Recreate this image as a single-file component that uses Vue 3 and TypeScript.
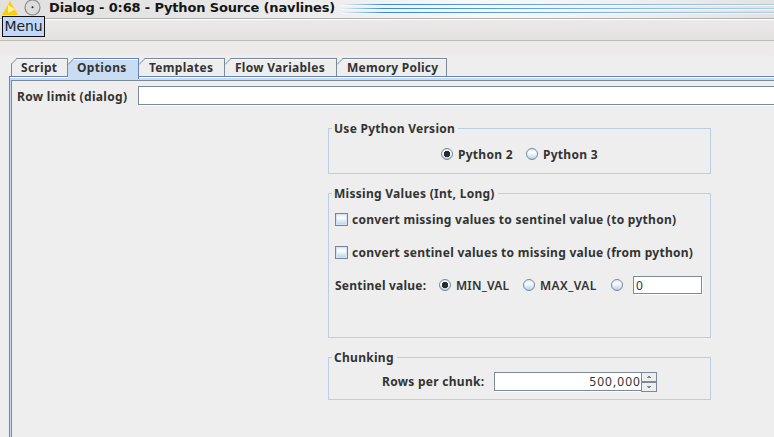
<script setup lang="ts">
import { ref } from 'vue'

const tabs = [
  { name: 'Script', cls: 't-script' },
  { name: 'Options', cls: 't-options' },
  { name: 'Templates', cls: 't-templates' },
  { name: 'Flow Variables', cls: 't-flow' },
  { name: 'Memory Policy', cls: 't-memory' },
]
const activeTab = ref('Options')
const pythonVersion = ref(2)
const sentinel = ref('min')
const toPython = ref(false)
const fromPython = ref(false)
const rowLimit = ref('')
const customValue = ref('0')
const rowsPerChunk = ref('500,000')
</script>

<template>
  <div class="dialog">
    <header class="titlebar">
      <svg class="logo" width="16" height="16" viewBox="0 0 16 16">
        <path d="M8 1L16 15H0Z" fill="#fdcf08" />
        <path d="M6 5L13 9.5L6 13Z" fill="#fff0a8" />
      </svg>
      <svg class="orb" width="17" height="17" viewBox="0 0 17 17">
        <circle cx="8.5" cy="8.5" r="7.5" fill="#dcdcdc" stroke="#8a8a8a" stroke-width="1.2" />
        <circle cx="8.5" cy="8.3" r="1" fill="#222" />
      </svg>
      <span class="title">Dialog - 0:68 - Python Source (navlines)</span>
      <div class="stripes"><i></i><i></i><i></i></div>
    </header>
    <div class="toolbar"><button class="menu">Menu</button></div>

    <nav class="tabs">
      <button
        v-for="tab in tabs"
        :key="tab.name"
        class="tab"
        :class="[tab.cls, { active: activeTab === tab.name }]"
        @click="activeTab = tab.name"
      >
        <svg class="corner" width="7" height="7" viewBox="0 0 7 7">
          <path class="cut" d="M0 0H6L0 6Z" />
          <path class="edge" d="M0 6.5L6.5 0" />
        </svg>
        <span>{{ tab.name }}</span>
      </button>
    </nav>

    <main class="pane">
      <div class="limit-row">
        <label class="limit-label" for="limit">Row limit (dialog)</label>
        <input id="limit" v-model="rowLimit" class="field limit" />
      </div>

      <div class="groups">
        <section class="group version">
          <h2 class="legend">Use Python Version</h2>
          <div class="version-row">
            <label class="radio" @click="pythonVersion = 2">
              <span class="dot" :class="{ on: pythonVersion === 2 }"></span>
              <span class="text">Python 2</span>
            </label>
            <label class="radio" @click="pythonVersion = 3">
              <span class="dot" :class="{ on: pythonVersion === 3 }"></span>
              <span class="text">Python 3</span>
            </label>
          </div>
        </section>

        <section class="group missing">
          <h2 class="legend">Missing Values (Int, Long)</h2>
          <label class="check" @click="toPython = !toPython">
            <span class="box"></span>
            <span class="text">convert missing values to sentinel value (to python)</span>
          </label>
          <label class="check" @click="fromPython = !fromPython">
            <span class="box"></span>
            <span class="text">convert sentinel values to missing value (from python)</span>
          </label>
          <div class="sentinel-row">
            <span class="text s-label">Sentinel value:</span>
            <label class="radio r-min" @click="sentinel = 'min'">
              <span class="dot" :class="{ on: sentinel === 'min' }"></span>
              <span class="text constant">MIN_VAL</span>
            </label>
            <label class="radio r-max" @click="sentinel = 'max'">
              <span class="dot" :class="{ on: sentinel === 'max' }"></span>
              <span class="text constant wide">MAX_VAL</span>
            </label>
            <label class="radio r-custom" @click="sentinel = 'custom'">
              <span class="dot" :class="{ on: sentinel === 'custom' }"></span>
            </label>
            <input v-model="customValue" class="field custom" />
          </div>
        </section>

        <section class="group chunking">
          <h2 class="legend">Chunking</h2>
          <div class="chunk-row">
            <span class="s-rows">Rows per chunk:</span>
            <input v-model="rowsPerChunk" class="field chunk" />
            <div class="spinner">
              <button><svg width="4" height="2" viewBox="0 0 4 2"><path d="M1 0H3V1H4V2H0V1H1Z" /></svg></button>
              <button><svg width="4" height="2" viewBox="0 0 4 2"><path d="M0 0H4V1H3V2H1V1H0Z" /></svg></button>
            </div>
          </div>
        </section>
      </div>
    </main>
  </div>
</template>

<style>
body {
  margin: 0;
  overflow: hidden;
}
</style>

<style scoped>
* {
  box-sizing: border-box;
}
.dialog {
  width: 774px;
  height: 437px;
  overflow: hidden;
  display: flex;
  flex-direction: column;
  background: linear-gradient(#ecebea 55px, #eeeeee 56px);
  font: bold 12px/16px 'Noto Sans', sans-serif;
  letter-spacing: 0.28px;
  color: #333;
  white-space: nowrap;
}
button {
  font: inherit;
  letter-spacing: inherit;
  color: inherit;
  margin: 0;
  padding: 0;
  border: 0;
  background: none;
}
.titlebar {
  flex: none;
  height: 20px;
  display: flex;
  background: linear-gradient(100deg, #e2e1e0 0%, #e5e5e5 25%, #f8f8f8 62%, #f4f4f4 74%, #e2e2e2 100%);
  border-bottom: 1px solid #fff;
  box-shadow: inset 0 -1px #afafaf;
}
.logo {
  margin-left: 2px;
}
.orb {
  margin: -1px 0 0 6px;
}
.title {
  width: 286px;
  margin-left: 8px;
  font: bold 13px/16px 'DejaVu Sans', sans-serif;
  letter-spacing: -0.16px;
  color: #151515;
}
.stripes {
  flex: 1;
  margin-left: 6px;
  padding-top: 4px;
  display: flex;
  flex-direction: column;
  gap: 3px;
}
.stripes i {
  flex: none;
  height: 1px;
  background: linear-gradient(90deg, #3488df00, #3488df 10%, #4292e0 22%, #82b5e6 65%, #b2cbe5);
  box-shadow: 0 1px #ffffffa0;
}
.toolbar {
  flex: none;
  height: 21px;
  background: linear-gradient(#ebeae9, #e2e1e0);
  border-bottom: 1px solid #bdbcbb;
}
.menu {
  position: relative;
  top: -4px;
  margin-left: 2px;
  display: block;
  width: 43px;
  height: 21px;
  border: 1px solid #111;
  background: #bfd8fb;
  font: 14px/19px 'DejaVu Sans', sans-serif;
  letter-spacing: -0.1px;
  color: #222;
}
.tabs {
  flex: none;
  display: flex;
  height: 18px;
  margin: 17px 0 0 11px;
}
.tab {
  position: relative;
  display: flex;
  height: 18px;
  border-top: 1px solid #7a8a99;
  border-right: 1px solid #7a8a99;
  box-shadow: inset 0 1px #f8f8f8;
  padding-left: 10px;
  line-height: 17px;
}
.tab:first-child {
  border-left: 1px solid #7a8a99;
  padding-left: 9px;
}
.corner {
  position: absolute;
  left: 0;
  top: -1px;
}
.tab:first-child .corner {
  left: -1px;
}
.cut {
  fill: #eee;
}
.edge {
  fill: none;
  stroke: #7a8a99;
}
.tab.active {
  z-index: 1;
  height: 21px;
  padding-left: 9px;
  background: #c8ddf2;
  border-color: #6382bf;
  box-shadow: inset 0 1px #fff;
}
.t-script { width: 57px; }
.t-options { width: 71px; letter-spacing: 0.36px; }
.t-templates { width: 86px; }
.t-flow { width: 112px; }
.t-memory { width: 110px; letter-spacing: 0; }

.t-memory { letter-spacing: 0.02em; }

.pane {
  flex: 1;
  min-height: 0;
  margin-left: 9px;
  border-left: 1px solid #6382bf;
  border-top: 1px solid #6382bf;
  background:
    linear-gradient(#fff, #fff) 0 0 / 100% 1px no-repeat,
    linear-gradient(#c8ddf2, #c8ddf2) 0 1px / 100% 2px no-repeat,
    linear-gradient(#c8ddf2, #c8ddf2) 0 0 / 1px 100% no-repeat,
    linear-gradient(#7a8a99, #7a8a99) 1px 3px / 100% 1px no-repeat,
    linear-gradient(#7a8a99, #7a8a99) 1px 3px / 1px 100% no-repeat,
    #eee;
}
.limit-row {
  display: flex;
  height: 28px;
  padding: 9px 0 0 7px;
}
.limit-label {
  flex: none;
  width: 121px;
  line-height: 21px;
  letter-spacing: 0.33px;
}
.field {
  flex: none;
  margin: 0;
  padding: 0 2px;
  border: 1px solid #7a8a99;
  border-radius: 0;
  outline: 0;
  background: #fff;
  box-shadow: 1px 1px #fff;
  font: 12px/16px 'Noto Sans', sans-serif;
  color: #333;
}
.limit {
  width: 640px;
  height: 19px;
}
.groups {
  width: 383px;
  margin: 23px 0 0 318px;
  display: flex;
  flex-direction: column;
}
.group {
  border: 1px solid #b8cfe5;
}
.legend {
  width: max-content;
  height: 16px;
  margin: -8px 0 0 3px;
  padding: 0 3px 0 2px;
  background: #eee;
  font: inherit;
}
.version {
  height: 46px;
}
.missing {
  height: 145px;
  margin-top: 19px;
}
.chunking {
  height: 43px;
  margin-top: 19px;
}
.version-row {
  display: flex;
  padding: 9px 0 0 112px;
}
.text {
  padding-top: 2px;
}
.constant {
  font-weight: 600;
  letter-spacing: 0.2px;
}
.constant.wide {
  letter-spacing: 0.45px;
}
.radio {
  display: flex;
  align-items: center;
  height: 16px;
}
.version-row .radio {
  width: 85px;
}
.dot {
  flex: none;
  width: 12px;
  height: 12px;
  margin-right: 5px;
  border: 1px solid #74879a;
  border-radius: 50%;
  background: linear-gradient(#dce8f3, #fff 35%, #b8cfe5);
}
.dot.on {
  background:
    radial-gradient(circle, #2b2b2b 0 2.9px, transparent 3.5px),
    linear-gradient(#dce8f3, #fff 35%, #b8cfe5);
}
.check {
  display: flex;
  align-items: center;
  height: 16px;
  margin: 9px 0 0 6px;
}
.check + .check {
  margin-top: 17px;
}
.box {
  width: 13px;
  height: 13px;
  margin-right: 4px;
  border: 1px solid #74879a;
  box-shadow: inset 0 0 0 1px #d5e2ef;
  background: linear-gradient(#dce8f3, #fff 35%, #b8cfe5);
}
.sentinel-row {
  display: flex;
  align-items: center;
  height: 18px;
  margin: 16px 0 0 6px;
}
.s-label { width: 104px; letter-spacing: 0.22px; }
.r-min { width: 84px; }
.r-max { width: 88px; }
.r-custom { width: 22px; }
.custom { width: 69px; height: 18px; }
.chunk-row {
  display: flex;
  margin: 6px 0 0 53px;
}
.s-rows {
  width: 112px;
  line-height: 19px;
}
.chunk {
  width: 148px;
  height: 19px;
  text-align: right;
  padding-right: 0;
  letter-spacing: 1.05px;
}
.spinner {
  display: flex;
  flex-direction: column;
  width: 16px;
  height: 20px;
  margin-left: -1px;
  z-index: 1;
}
.spinner button {
  height: 10px;
  width: 16px;
  border: 1px solid #7a8a99;
  background: #eee;
  display: flex;
  align-items: center;
  justify-content: center;
}
.spinner path {
  fill: #74879a;
}
</style>
